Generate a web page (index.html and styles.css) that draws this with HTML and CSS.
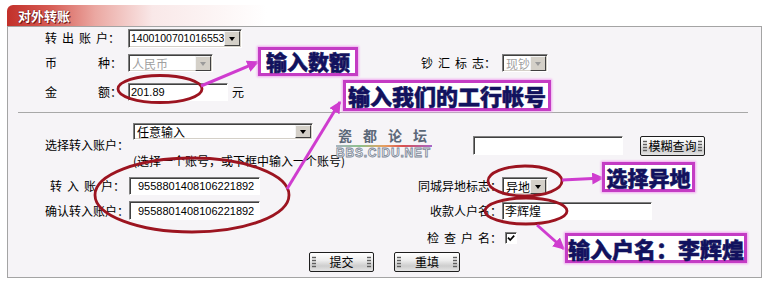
FILE: index.html
```html
<!DOCTYPE html>
<html>
  <head>
    <meta charset="utf-8">
    <link rel="stylesheet" href="styles.css">
  </head>
  <body>
    <div id="page">
      <div class="tab">对外转账</div>
      <div class="panel">
        <div class="form top">
          <span class="lab c2 r1"><span class="sp">转 出 账 户：</span></span>
          <span class="c3 r1"><span class="sel w114"><span class="val">1400100701016553</span><span class="arr"></span></span></span>

          <span class="lab c2 r2 split"><span>币</span><span>种：</span></span>
          <span class="c3 r2"><span class="sel dis w85"><span class="val">人民币</span><span class="arr"></span></span></span>
          <span class="lab lab-r c4 r2 shift"><span class="sp">钞 汇 标 志：</span></span>
          <span class="c5 r2"><span class="sel dis w46"><span class="val">现钞</span><span class="arr"></span></span></span>

          <span class="lab c2 r3 split"><span>金</span><span>额：</span></span>
          <span class="c3 r3 row"><input class="inp w100 pad2" value="201.89"><span class="unit">元</span></span>
        </div>

        <hr class="divider">

        <div class="form bottom">
          <span class="lab lab-b c2 r12">选择转入账户：</span>
          <span class="c3 r1 top-al"><span class="sel wide"><span class="val">任意输入</span><span class="arr"></span></span></span>
          <span class="c3 r2 hint">(选择一个账号，或下框中输入一个账号)</span>
          <span class="search">
            <input class="inp w150 pad2">
            <button class="btn">模糊查询</button>
          </span>

          <span class="lab lab-b c2 r3"><span class="sp">转 入 账 户：</span></span>
          <span class="c3 r3"><input class="inp acct" value="9558801408106221892"></span>
          <span class="lab lab-r c4 r3">同城异地标志：</span>
          <span class="c5 r3"><span class="sel w46 h18"><span class="val">异地</span><span class="arr"></span></span></span>

          <span class="lab lab-b c2 r4">确认转入账户：</span>
          <span class="c3 r4"><input class="inp acct h19" value="9558801408106221892"></span>
          <span class="lab lab-r c4 r4">收款人户名：</span>
          <span class="c5 r4"><input class="inp w150 pad2 cn" value="李辉煌"></span>

          <span class="lab lab-r c4 r5"><span class="sp">检 查 户 名：</span></span>
          <span class="c5 r5"><span class="chk"><svg viewBox="0 0 10 10"><path d="M2 4.6 L4.2 7 L8.2 2.6" fill="none" stroke="#000" stroke-width="1.7"/></svg></span></span>

          <div class="actions">
            <button class="btn">提交</button>
            <button class="btn w66">重填</button>
          </div>
        </div>
      </div>

      <div class="logo">
        <div class="logo-cn">瓷都论坛</div>
        <div class="logo-line"></div>
        <div class="logo-en">BBS.CIDU.NET</div>
      </div>

      <svg class="marks" width="770" height="289" viewBox="0 0 770 289">
        <defs>
          <marker id="ah" viewBox="0 0 10 10" refX="9" refY="5" markerWidth="4" markerHeight="4" orient="auto">
            <path d="M0 0 L10 5 L0 10 Z" fill="#cf3ccf"/>
          </marker>
        </defs>
        <g fill="none" stroke="#9c1420" stroke-width="2.8">
          <ellipse cx="160" cy="89" rx="42" ry="13.5"/>
          <ellipse cx="192" cy="195" rx="97" ry="37"/>
          <ellipse cx="525" cy="181" rx="37" ry="15"/>
          <ellipse cx="526" cy="211" rx="41" ry="13"/>
        </g>
        <g stroke="#cf3ccf" stroke-width="3" marker-end="url(#ah)">
          <line x1="201" y1="86" x2="258" y2="62"/>
          <line x1="287" y1="189" x2="340" y2="102"/>
          <line x1="562" y1="180" x2="603" y2="178"/>
          <line x1="537" y1="225" x2="564" y2="249"/>
        </g>
      </svg>

      <div class="note n1">输入数额</div>
      <div class="note n2">输入我们的工行帐号</div>
      <div class="note n3">选择异地</div>
      <div class="note n4">输入户名：李辉煌</div>
    </div>
  </body>
</html>
```

FILE: styles.css
```css
body {
  margin: 0;
  background: #fff;
  color: #000;
  font: 12px "Noto Sans CJK SC", sans-serif;
}

#page {
  position: relative;
  width: 770px;
  height: 289px;
  overflow: hidden;
}

.tab {
  margin: 5px 0 0 7px;
  width: 260px;
  height: 21px;
  box-sizing: border-box;
  padding-left: 11px;
  line-height: 21px;
  border-radius: 6px 0 0 0;
  background: linear-gradient(to right, #c2302a, #d65a52 16%, #eba8a2 34%, #f9e8e8 56%, rgba(255, 255, 255, 0));
  color: #fff;
  font-size: 13px;
  font-weight: bold;
  text-shadow: 0 0 1px #5a0808, 1px 1px 0 #7a1414;
}

.panel {
  margin-left: 7px;
  width: 755px;
  height: 252px;
  box-sizing: border-box;
  border: 1px solid #a4a4a4;
  background: #f6f4f7;
}

.form {
  display: grid;
  grid-template-columns: 37px 83px 240px 134px 1fr;
  align-items: center;
}

.top {
  grid-template-rows: 22px 28px 29px;
}

.bottom {
  padding-top: 10px;
  grid-template-rows: 24px 28px 22px 27px 28px 20px;
}

.c2 { grid-column: 2; }
.c3 { grid-column: 3; }
.c4 { grid-column: 4; }
.c5 { grid-column: 5; }
.r1 { grid-row: 1; }
.r2 { grid-row: 2; }
.r3 { grid-row: 3; }
.r4 { grid-row: 4; }
.r5 { grid-row: 5; }
.r12 { grid-row: 1 / 3; }

.lab {
  white-space: nowrap;
  line-height: 16px;
}

.sp {
  word-spacing: 2.3px;
}

.split {
  display: flex;
  justify-content: space-between;
  width: 77px;
}

.lab-r {
  text-align: right;
}

.lab-r.shift {
  padding-right: 6px;
}

.lab-b {
  text-align: right;
  padding-right: 3px;
}

.lab-b.r12 {
  margin-bottom: 8px;
}

.row {
  display: flex;
  align-items: center;
}

.unit {
  margin-left: 4px;
}

/* classic combo box */
.sel {
  display: flex;
  align-items: center;
  box-sizing: border-box;
  height: 19px;
  background: #fff;
  border: 1px solid;
  border-color: #808080 #fff #fff #808080;
  box-shadow: inset 1px 1px 0 #404040, inset -1px -1px 0 #d4d0c8;
  overflow: hidden;
}

.sel .val {
  flex: 1;
  min-width: 0;
  padding-left: 3px;
  overflow: hidden;
  white-space: nowrap;
  line-height: 15px;
  font-family: "Noto Sans CJK SC", sans-serif;
}

.w114 .val {
  font: 10.5px "Liberation Sans", sans-serif;
  padding-left: 2px;
}

.sel .arr {
  position: relative;
  flex: none;
  width: 16px;
  height: 15px;
  margin-right: 1px;
  box-sizing: border-box;
  background: #d4d0c8;
  border: 1px solid;
  border-color: #f4f4f4 #404040 #404040 #f4f4f4;
}

.sel .arr::after {
  content: "";
  position: absolute;
  left: 4px;
  top: 5px;
  border-left: 3.5px solid transparent;
  border-right: 3.5px solid transparent;
  border-top: 4px solid #000;
}

.sel.dis .val {
  color: #a0a0a0;
}

.sel.dis .arr::after {
  border-top-color: #9a9a9a;
}

.w114 { width: 114px; }
.w85 { width: 85px; height: 18px; }
.w46 { width: 46px; height: 18px; }
.h18 { height: 18px; }
.wide {
  width: 180px;
  height: 17px;
  margin-left: 5px;
}

.wide .arr {
  height: 13px;
}

.wide .arr::after {
  top: 4px;
}

.top-al {
  align-self: start;
}

.hint {
  margin-left: 5px;
  white-space: nowrap;
  line-height: 16px;
}

.inp {
  display: block;
  box-sizing: border-box;
  height: 18px;
  margin: 0;
  padding: 0 0 0 2px;
  background: #fff;
  border: 1px solid;
  border-color: #808080 #fff #fff #808080;
  box-shadow: inset 1px 1px 0 #404040;
  font: 11px "Liberation Sans", sans-serif;
  color: #000;
  outline: none;
}

.inp.cn {
  font: 12px "Noto Sans CJK SC", sans-serif;
}

.w100 { width: 100px; }
.w150 { width: 150px; }

.acct {
  width: 131px;
  margin-left: 1px;
  padding-left: 8px;
}

.h19 { height: 19px; }

.search {
  grid-column: 4 / 6;
  grid-row: 1 / 3;
  display: flex;
  align-items: center;
  gap: 17px;
  margin: 0 0 7px 105px;
}

.search .inp {
  height: 19px;
}

.btn {
  position: relative;
  width: 65px;
  height: 20px;
  box-sizing: border-box;
  padding: 0;
  border: 1px solid #1e1e1e;
  border-radius: 2px;
  background: linear-gradient(#ffffff, #eeeeee 40%, #cdcdcd 72%, #e4e4e4);
  color: #000;
  font: 12px "Noto Sans CJK SC", sans-serif;
  line-height: 18px;
}

.btn::before,
.btn::after {
  content: "";
  position: absolute;
  top: 3px;
  width: 4px;
  height: 12px;
  background: radial-gradient(circle, #5e5e5e 0.8px, transparent 1.2px) 0 0 / 2px 3px;
}

.btn::before { left: 2px; }
.btn::after { right: 2px; }

.w66 { width: 66px; }

.chk {
  display: block;
  width: 12px;
  height: 12px;
  margin-left: 3px;
  box-sizing: border-box;
  background: #fff;
  border: 1px solid;
  border-color: #808080 #fff #fff #808080;
  box-shadow: inset 1px 1px 0 #404040;
}

.chk svg {
  display: block;
  width: 10px;
  height: 10px;
}

.actions {
  grid-column: 1 / -1;
  grid-row: 6;
  display: flex;
  justify-content: center;
  gap: 20px;
}

.divider {
  margin: 6px 13px 0 10px;
  height: 0;
  border: 0;
  border-top: 1px solid #a8a8a8;
}

/* forum watermark pasted over the screenshot */
.logo {
  position: absolute;
  left: 336px;
  top: 126px;
  width: 96px;
}

.logo-cn {
  padding-left: 2px;
  color: #5c6878;
  font-size: 14px;
  font-weight: bold;
  letter-spacing: 11px;
  line-height: 18px;
  white-space: nowrap;
}

.logo-line {
  height: 2px;
  margin-top: 1px;
  background: linear-gradient(to right, #a8b4c0, #8cc08c 25%, #e8a060 50%, #d85050 70%, #a868c8);
}

.logo-en {
  color: #f2f2f4;
  -webkit-text-stroke: 0.8px #7c8898;
  font: bold 12px "Liberation Sans", sans-serif;
  letter-spacing: 0.8px;
  line-height: 12px;
  white-space: nowrap;
}

.marks {
  position: absolute;
  left: 0;
  top: 0;
}

.note {
  position: absolute;
  box-sizing: border-box;
  border: 3px solid #c43cc4;
  box-shadow: 0 0 2px 1px #f0a8f0;
  background: #fff;
  color: #12125e;
  font-weight: 900;
  -webkit-text-stroke: 0.5px #12125e;
  text-align: center;
  white-space: nowrap;
}

.n1 { left: 258px; top: 47px; width: 100px; height: 29px; font-size: 21px; line-height: 23px; }
.n2 { left: 343px; top: 80px; width: 208px; height: 31px; font-size: 22px; line-height: 25px; }
.n3 { left: 602px; top: 162px; width: 93px; height: 30px; font-size: 21px; line-height: 24px; }
.n4 { left: 565px; top: 233px; width: 182px; height: 30px; font-size: 22px; line-height: 24px; }
```
